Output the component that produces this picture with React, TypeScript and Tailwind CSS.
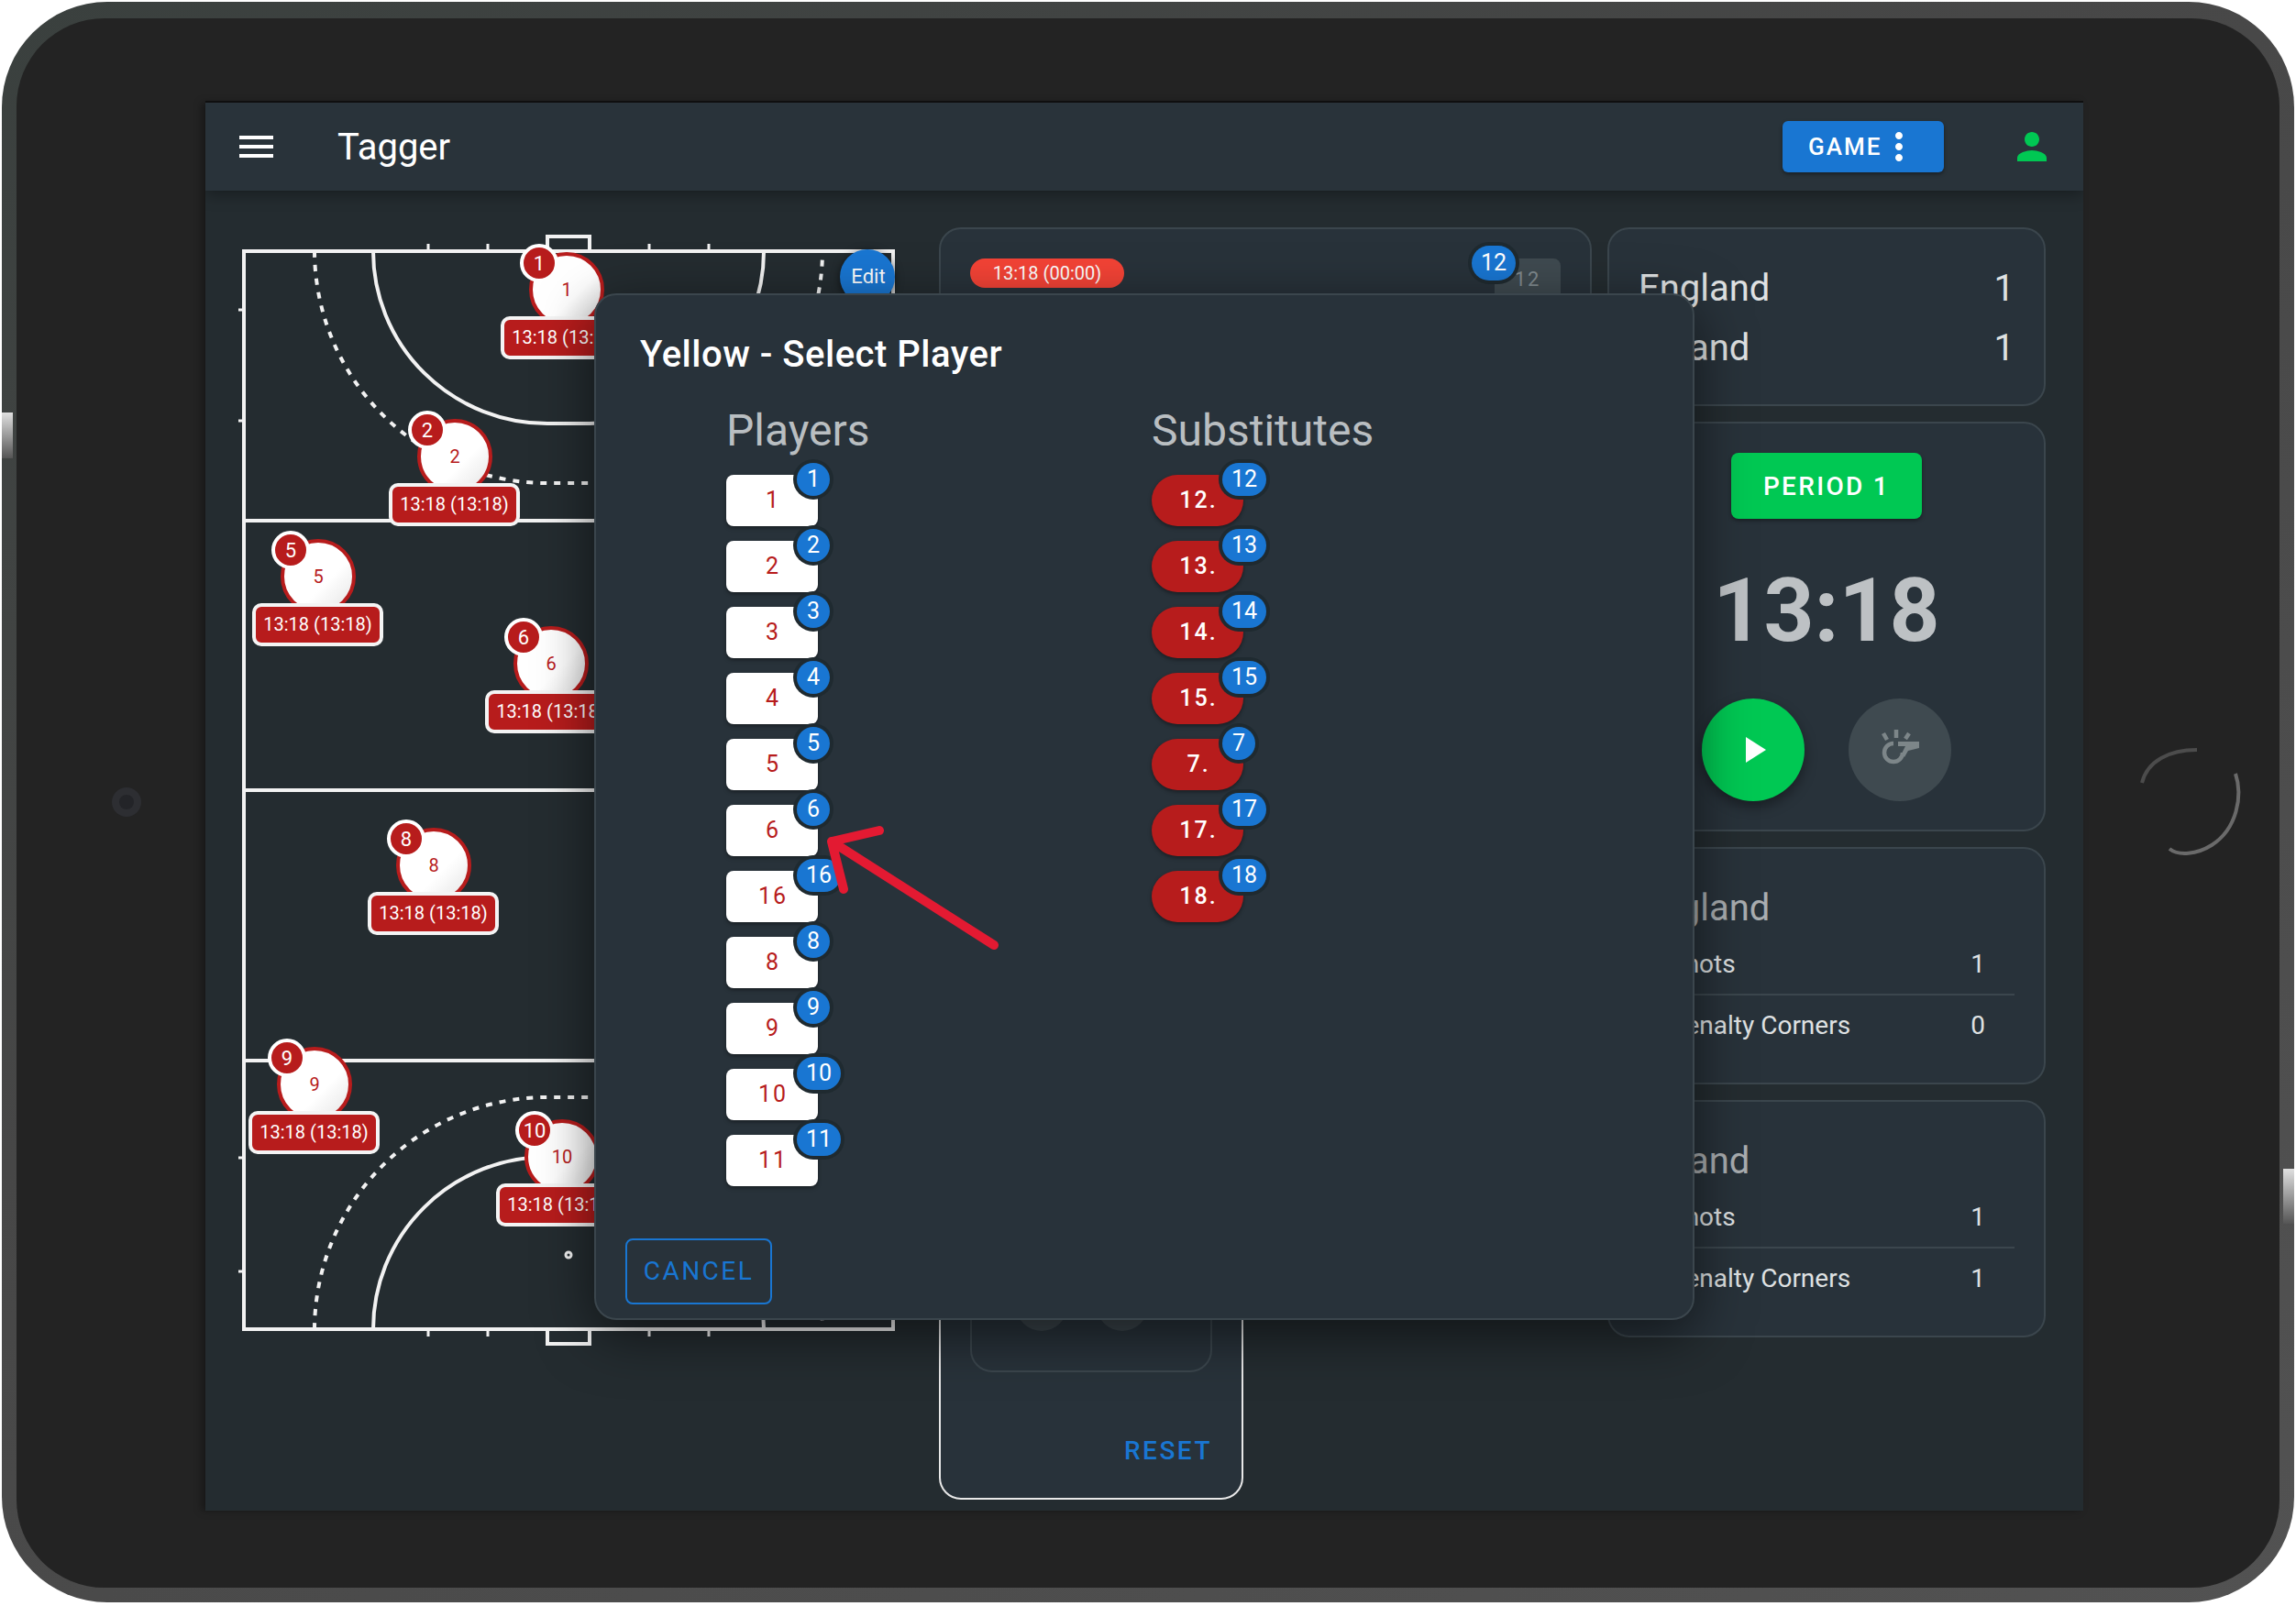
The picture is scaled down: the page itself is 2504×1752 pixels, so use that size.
const markers = [
  { n: 1, x: 362, y: 66 },
  { n: 2, x: 240, y: 248 },
  { n: 5, x: 91, y: 379 },
  { n: 6, x: 345, y: 474 },
  { n: 8, x: 217, y: 694 },
  { n: 9, x: 87, y: 933 },
  { n: 10, x: 357, y: 1012 },
];

const players = [1, 2, 3, 4, 5, 6, 16, 8, 9, 10, 11];
const substitutes = [12, 13, 14, 15, 7, 17, 18];

function FieldLines() {
  return (
    <svg viewBox="256 250 730 1225" className="absolute inset-0 w-[730px] h-[1225px]" fill="none" stroke="#f2f2f2">
      <g strokeWidth="4">
        <rect x="266" y="274" width="708" height="1176" />
        <path d="M266 568H974M266 862H974M266 1157H974" />
        <path d="M407 274A190 188 0 0 0 597 462H643A190 188 0 0 0 833 274" />
        <path d="M407 1450A190 188 0 0 1 597 1262H643A190 188 0 0 1 833 1450" />
        <path d="M343 274A254 254 0 0 0 597 527H643A254 254 0 0 0 897 274" strokeDasharray="7 8" />
        <path d="M343 1450A254 254 0 0 1 597 1197H643A254 254 0 0 1 897 1450" strokeDasharray="7 8" />
        <path d="M597 272V258H643V272M597 1452V1466H643V1452" />
      </g>
      <g strokeWidth="3">
        <path d="M467 266V272M532 266V272M708 266V272M773 266V272" />
        <path d="M467 1452V1458M532 1452V1458M708 1452V1458M773 1452V1458" />
        <path d="M260 338H266M260 459H266M260 1263H266M260 1387H266" />
        <circle cx="620" cy="1369" r="3" />
      </g>
    </svg>
  );
}

function Marker({ n, x, y }: { n: number; x: number; y: number }) {
  return (
    <div className="absolute w-0 h-0" style={{ left: x, top: y }}>
      <div className="absolute left-[-41px] top-[-41px] w-[82px] h-[82px] rounded-full border-4 border-[#b71c1c] bg-[linear-gradient(135deg,#ffffff_60%,#e4e4e4)] flex items-center justify-center text-[#b71c1c] text-[20px]">
        {n}
      </div>
      <div className="absolute left-[-51px] top-[-50px] w-[42px] h-[42px] rounded-full border-4 border-white bg-[#b71c1c] flex items-center justify-center text-white text-[22px]">
        {n}
      </div>
      <div className="absolute left-[-72px] top-[29px] w-[143px] h-[47px] rounded-[10px] border-4 border-[#f4f4f4] bg-[#b71c1c] flex items-center justify-center pb-[1px] text-white text-[20px] whitespace-nowrap">
        13:18 (13:18)
      </div>
    </div>
  );
}

function NumberBadge({ n }: { n: number }) {
  return (
    <span className="absolute left-[77px] top-[-13px] min-w-[36px] h-[36px] px-[10px] rounded-full bg-[#1976d2] ring-4 ring-[#1f2a30] flex items-center justify-center text-white text-[25px] font-normal tracking-normal">
      {n}
    </span>
  );
}

function StatCard({ team, corners }: { team: string; corners: number }) {
  return (
    <div className="mt-[17px] h-[259px] rounded-[24px] border-2 border-[#3b464d] bg-[#28323a] px-[32px] pt-[37px]">
      <div className="h-[56px] leading-[56px] text-[40px] font-normal text-[#a9adb0]">{team}</div>
      <div className="h-[67px] flex items-center justify-between border-b-2 border-[#3b464d] pl-[34px] text-[28px] text-[#dfe1e2]">
        <span>Shots</span>
        <span className="w-[80px] text-center">1</span>
      </div>
      <div className="h-[66px] flex items-center justify-between pl-[34px] text-[28px] text-[#dfe1e2]">
        <span>Penalty Corners</span>
        <span className="w-[80px] text-center">{corners}</span>
      </div>
    </div>
  );
}

export default function App() {
  return (
    <div className="w-[2504px] h-[1752px] bg-white [font-family:Roboto,sans-serif] overflow-hidden pt-[2px] pl-[2px] pr-[2px] pb-[4px]">
      <div className="relative w-full h-full rounded-[115px] bg-[linear-gradient(150deg,#3a403e,#474747_40%,#525252)] pl-[16px] pr-[16px] pt-[18px] pb-[16px]">
        <div className="absolute left-[0px] top-[448px] w-[12px] h-[50px] bg-[linear-gradient(#e0e0e0,#555555)]" />
        <div className="absolute right-[0px] top-[1273px] w-[12px] h-[60px] bg-[linear-gradient(#e0e0e0,#555555)]" />

        <div className="relative w-full h-full rounded-[96px] bg-[#232323] pl-[206px] pt-[92px]">
          <div className="absolute left-[104px] top-[839px] w-[32px] h-[32px] rounded-full bg-[#2d2e32] flex items-center justify-center">
            <div className="w-[16px] h-[16px] rounded-full bg-[#232428]" />
          </div>
          <svg viewBox="0 0 120 124" className="absolute left-[2312px] top-[792px] w-[120px] h-[124px] blur-[0.7px]" fill="none">
            <path d="M108 32C116 56 110 92 82 110C66 120 46 122 36 114" stroke="#6a6a6a" strokeWidth="4" />
            <path d="M6 42C12 18 36 6 66 6" stroke="#4c4c4c" strokeWidth="4" />
          </svg>

          {/* tablet screen */}
          <div className="relative w-[2048px] h-[1536px] bg-[#242c30] text-white shadow-[0_-2px_0_#0f0f0f,-4px_0_8px_rgba(0,0,0,0.35)] overflow-hidden">
            <header className="relative z-10 h-[96px] bg-[#29333a] shadow-[0_4px_16px_rgba(0,0,0,0.35)] flex items-center pl-[37px] pr-[32px]">
              <svg viewBox="0 0 37 24" className="w-[37px] h-[24px]" fill="#ffffff">
                <path d="M0 0H37V4H0ZM0 10H37V14H0ZM0 20H37V24H0Z" />
              </svg>
              <h1 className="ml-[70px] pt-[2px] text-[40px] font-normal">Tagger</h1>
              <button className="ml-auto w-[176px] h-[56px] rounded-[6px] bg-[#1976d2] shadow-[0_2px_4px_rgba(0,0,0,0.4)] flex items-center pl-[28px] text-[26px] font-medium tracking-[2px]">
                GAME
                <svg viewBox="0 0 24 24" className="ml-[-5px] w-[48px] h-[48px]" fill="#ffffff">
                  <path d="M12 8c1.1 0 2-.9 2-2s-.9-2-2-2-2 .9-2 2 .9 2 2 2zm0 2c-1.1 0-2 .9-2 2s.9 2 2 2 2-.9 2-2-.9-2-2-2zm0 6c-1.1 0-2 .9-2 2s.9 2 2 2 2-.9 2-2-.9-2-2-2z" />
                </svg>
              </button>
              <svg viewBox="0 0 24 24" className="ml-[72px] w-[48px] h-[48px]" fill="#00c853">
                <path d="M12 12c2.21 0 4-1.79 4-4s-1.79-4-4-4-4 1.79-4 4 1.79 4 4 4zm0 2c-2.67 0-8 1.34-8 4v2h16v-2c0-2.66-5.33-4-8-4z" />
              </svg>
            </header>

            <main className="flex h-[1440px] pl-[32px] pt-[40px] pb-[12px]">
              {/* pitch */}
              <div className="relative w-[730px] h-[1225px] mt-[2px] shrink-0">
                <FieldLines />
                {markers.map((m) => (
                  <Marker key={m.n} {...m} />
                ))}
                <button className="absolute left-[660px] top-[22px] w-[60px] h-[60px] rounded-full bg-[#1976d2] shadow-[0_2px_10px_rgba(0,0,0,0.6)] pb-[2px] pl-[2px] text-white text-[22px]">
                  Edit
                </button>
              </div>

              {/* events */}
              <div className="ml-[38px] w-[712px] shrink-0 flex flex-col">
                <div className="h-[460px] rounded-[24px] border-2 border-[#3b464d] bg-[#28323a] flex items-start justify-between px-[32px] pt-[32px]">
                  <span className="h-[32px] w-[168px] rounded-full bg-[#f44336] flex items-center justify-center text-[20px]">13:18 (00:00)</span>
                  <div className="relative w-[72px] h-[80px] rounded-[8px] bg-[#3f4a50] text-[#7f898e] text-[22px] tracking-[2px] text-center pt-[6px]">
                    12
                    <span className="absolute left-[-25px] top-[-14px] w-[48px] h-[38px] rounded-full bg-[#1976d2] ring-4 ring-[#1f2a30] flex items-center justify-center text-white text-[25px] tracking-normal">
                      12
                    </span>
                  </div>
                </div>
                <div className="mt-[16px] flex-1 w-[332px] rounded-[24px] border-2 border-[#e8e8e8] bg-[#28323a] flex flex-col px-[32px]">
                  <div className="flex-1 mt-[16px] rounded-[24px] border-2 border-[#3b464d] flex items-end justify-center gap-[32px] pr-[20px] pb-[43px]">
                    <div className="w-[56px] h-[56px] rounded-full bg-[#3a444a]" />
                    <div className="w-[56px] h-[56px] rounded-full bg-[#3a444a]" />
                  </div>
                  <div className="h-[137px] flex items-start justify-end pt-[65px] text-[#1976d2] text-[28px] font-medium tracking-[2.5px]">RESET</div>
                </div>
              </div>

              {/* score and clock */}
              <div className="ml-[17px] w-[478px] shrink-0 flex flex-col">
                <div className="h-[195px] rounded-[24px] border-2 border-[#3b464d] bg-[#28323a] px-[32px] pt-[32px] text-[40px] font-normal text-[#dfe1e2]">
                  <div className="h-[65px] flex items-center justify-between"><span>England</span><span>1</span></div>
                  <div className="h-[65px] flex items-center justify-between"><span>Ireland</span><span>1</span></div>
                </div>
                <div className="mt-[17px] h-[447px] rounded-[24px] border-2 border-[#3b464d] bg-[#28323a] flex flex-col items-center pt-[32px]">
                  <button className="w-[208px] h-[72px] rounded-[8px] bg-[#00c853] shadow-[0_2px_4px_rgba(0,0,0,0.4)] pt-[2px] text-[28px] font-medium tracking-[2.3px]">PERIOD 1</button>
                  <div className="mt-[44px] h-[112px] leading-[112px] text-[96px] font-bold text-[#bdc1c4]">13:18</div>
                  <div className="mt-[40px] flex gap-[48px]">
                    <button className="w-[112px] h-[112px] rounded-full bg-[#00c853] shadow-[0_6px_14px_rgba(0,0,0,0.4)] flex items-center justify-center">
                      <svg viewBox="0 0 24 24" className="w-[48px] h-[48px]" fill="#ffffff"><path d="M8 5v14l11-7z" /></svg>
                    </button>
                    <button className="w-[112px] h-[112px] rounded-full bg-[#3f4a50] flex items-center justify-center">
                      <svg viewBox="0 0 48 48" className="w-[48px] h-[48px]" fill="none" stroke="#7d8689" strokeWidth="4.5">
                        <path d="M20 2V11M6 6L10 13M34 6L30 12" />
                        <path d="M17 17A10 10 0 1 0 27 27" />
                        <path d="M22 15H45V22L33 25L29 32L26 28L30 20H22Z" fill="#7d8689" stroke="none" />
                      </svg>
                    </button>
                  </div>
                </div>
                <StatCard team="England" corners={0} />
                <StatCard team="Ireland" corners={1} />
              </div>
            </main>

            {/* select player dialog */}
            <div className="absolute left-[424px] top-[208px] z-20 w-[1200px] h-[1120px] rounded-[24px] border-2 border-[#3b464d] bg-[#28323a] shadow-[0_16px_60px_rgba(0,0,0,0.55)] flex flex-col pl-[48px] pt-[37px]">
              <h2 className="h-[56px] leading-[56px] text-[40px] font-medium tracking-[0.5px]">Yellow - Select Player</h2>
              <div className="mt-[27px] ml-[94px] flex">
                <div className="w-[464px]">
                  <h3 className="h-[56px] leading-[56px] text-[48px] font-normal text-[#b9bec1]">Players</h3>
                  <div className="mt-[20px] flex flex-col gap-[16px]">
                    {players.map((n) => (
                      <button key={n} className="relative w-[100px] h-[56px] rounded-[8px] bg-white shadow-[0_2px_4px_rgba(0,0,0,0.4)] pl-[2px] text-[#b71c1c] text-[25px] tracking-[2px]">
                        {n}
                        <NumberBadge n={n} />
                      </button>
                    ))}
                  </div>
                </div>
                <div>
                  <h3 className="h-[56px] leading-[56px] text-[48px] font-normal text-[#b9bec1]">Substitutes</h3>
                  <div className="mt-[20px] flex flex-col gap-[16px]">
                    {substitutes.map((n) => (
                      <button key={n} className="relative w-[100px] h-[56px] rounded-[28px] bg-[#b71c1c] shadow-[0_2px_4px_rgba(0,0,0,0.4)] pl-[2px] text-white text-[25px] font-medium tracking-[2px]">
                        {n}.
                        <NumberBadge n={n} />
                      </button>
                    ))}
                  </div>
                </div>
              </div>
              <button className="absolute left-[32px] top-[1029px] w-[160px] h-[72px] rounded-[8px] border-2 border-[#1976d2] text-[#1976d2] text-[28px] font-normal tracking-[2.5px]">
                CANCEL
              </button>
              <svg viewBox="0 0 210 150" className="absolute left-[240px] top-[568px] w-[210px] h-[150px]" fill="none" stroke="#e31a32" strokeWidth="10" strokeLinecap="round" strokeLinejoin="round">
                <path d="M194 141L17 28M69 16L17 28L30 80" />
              </svg>
            </div>
          </div>
        </div>
      </div>
    </div>
  );
}
